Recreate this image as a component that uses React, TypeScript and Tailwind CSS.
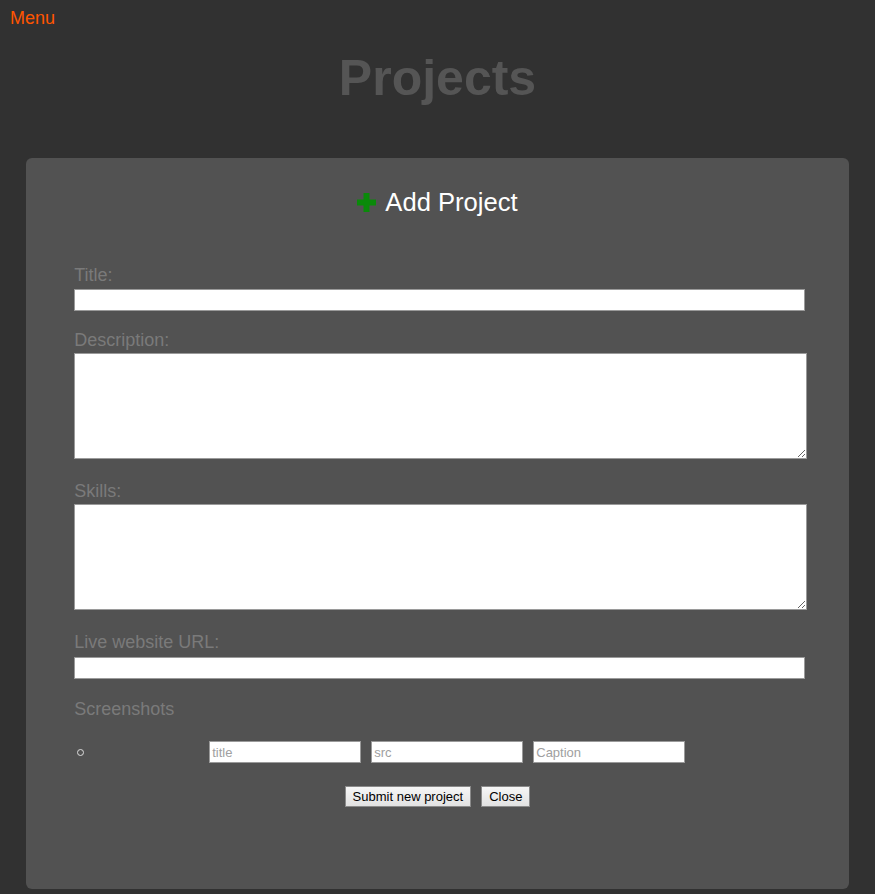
import React from "react";

const fieldBase =
  "block border border-[#9a9a9a] bg-white px-[2px] text-[13px] text-black outline-none";

function PlusIcon() {
  return (
    <svg width="19" height="19" viewBox="0 0 19 19" aria-hidden="true">
      <path d="M6.5 0h6v6.5H19v6h-6.5V19h-6v-6.5H0v-6h6.5z" fill="#0a8a0a" />
    </svg>
  );
}

function FieldLabel({ children, className = "" }: { children: React.ReactNode; className?: string }) {
  return (
    <label className={`block text-[18px] leading-[21px] text-[#7a7a7a] ${className}`}>
      {children}
    </label>
  );
}

export default function App() {
  return (
    <div
      className="min-h-screen bg-[#313131]"
      style={{ fontFamily: '"Liberation Sans", Arial, sans-serif' }}
    >
      <div className="h-[29px] pl-[10px] pt-[8px] text-[18px] leading-[21px]">
        <a className="text-[#ff5500]">Menu</a>
      </div>

      <h1 className="mt-[22px] h-[55px] text-center text-[50px] font-bold leading-[55px] text-[#555555]">
        Projects
      </h1>

      <form
        className="mx-auto mt-[52px] w-[94%] rounded-[6px] bg-[#525252] px-[48px] pb-[82px] pt-[29px]"
        onSubmit={(e) => e.preventDefault()}
      >
        <h2 className="flex h-[30px] items-center justify-center gap-[9px] text-[25.6px] leading-[30px] text-white">
          <PlusIcon />
          <span>Add Project</span>
        </h2>

        <FieldLabel className="mt-[48px]">Title:</FieldLabel>
        <input type="text" className={`${fieldBase} mt-[3px] h-[22px] w-[calc(100%+4px)]`} />

        <FieldLabel className="mt-[19px]">Description:</FieldLabel>
        <textarea className={`${fieldBase} mt-[2px] h-[106px] w-[calc(100%+6px)]`} />

        <FieldLabel className="mt-[22px]">Skills:</FieldLabel>
        <textarea className={`${fieldBase} mt-[2px] h-[106px] w-[calc(100%+6px)]`} />

        <FieldLabel className="mt-[22px]">Live website URL:</FieldLabel>
        <input type="text" className={`${fieldBase} mt-[4px] h-[22px] w-[calc(100%+4px)]`} />

        <FieldLabel className="mt-[20px]">Screenshots</FieldLabel>

        <div className="mt-[21px] flex h-[22px] items-center">
          <span className="ml-[3px] block h-[7px] w-[7px] rounded-full border border-[#dddddd]" />
          <div className="ml-[125px] flex gap-[10px]">
            <input
              type="text"
              placeholder="title"
              className={`${fieldBase} h-[22px] w-[152px] placeholder:text-[#a0a0a0]`}
            />
            <input
              type="text"
              placeholder="src"
              className={`${fieldBase} h-[22px] w-[152px] placeholder:text-[#a0a0a0]`}
            />
            <input
              type="text"
              placeholder="Caption"
              className={`${fieldBase} h-[22px] w-[152px] placeholder:text-[#a0a0a0]`}
            />
          </div>
        </div>

        <div className="mt-[23px] flex justify-center gap-[10px]">
          <button
            type="submit"
            className="h-[21px] border border-[#8a8a8a] bg-gradient-to-b from-[#f6f6f6] to-[#e2e2e2] px-[7px] text-[13px] leading-[19px] text-black"
          >
            Submit new project
          </button>
          <button
            type="button"
            className="h-[21px] border border-[#8a8a8a] bg-gradient-to-b from-[#f6f6f6] to-[#e2e2e2] px-[7px] text-[13px] leading-[19px] text-black"
          >
            Close
          </button>
        </div>
      </form>
    </div>
  );
}
